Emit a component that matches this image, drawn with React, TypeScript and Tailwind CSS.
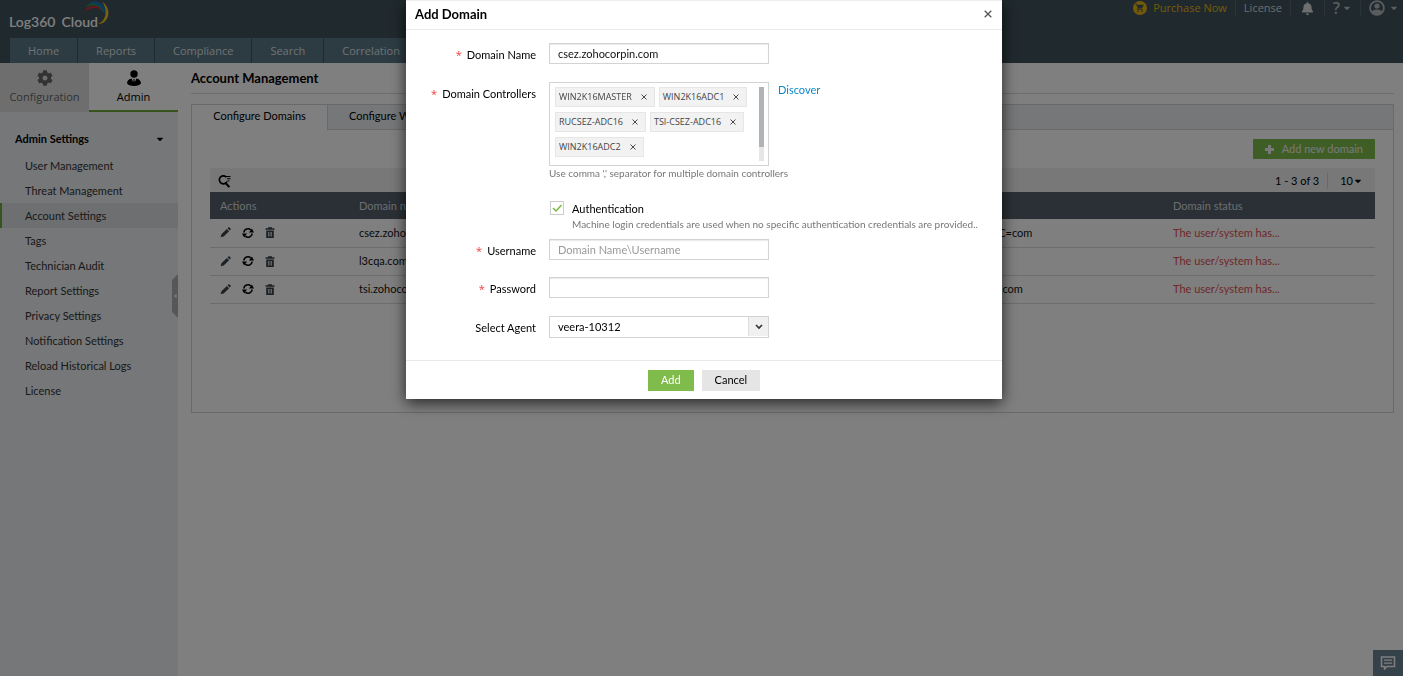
import React from "react";
import { FaBell, FaCog, FaCaretDown } from "react-icons/fa";
import { MdShoppingCart } from "react-icons/md";

const navItems = ["Home", "Reports", "Compliance", "Search", "Correlation"];

const sideItems = [
  "User Management",
  "Threat Management",
  "Account Settings",
  "Tags",
  "Technician Audit",
  "Report Settings",
  "Privacy Settings",
  "Notification Settings",
  "Reload Historical Logs",
  "License",
];

const domains = [
  { name: "csez.zohocorpin.com", dn: "DC=csez,DC=zohocorpin,DC=com" },
  { name: "l3cqa.com", dn: "DC=l3cqa,DC=com" },
  { name: "tsi.zohocorpin.com", dn: "DC=tsi,DC=zohocorpin,DC=com" },
];

const controllers = [
  "WIN2K16MASTER",
  "WIN2K16ADC1",
  "RUCSEZ-ADC16",
  "TSI-CSEZ-ADC16",
  "WIN2K16ADC2",
];

function Logo() {
  return (
    <a href="#" className="flex items-end pl-[9px] font-['Lato',sans-serif] text-white">
      <span className="flex gap-[6px] pb-[5px] text-[14px] leading-4 font-semibold">
        <span>Log360</span>
        <span>Cloud</span>
      </span>
      <svg viewBox="0 0 26 26" className="-ml-[15px] mb-[9px] size-[26px] shrink-0" aria-hidden="true">
        <path d="M1 12.500C4 5 12 3 18 9l1 2C14 6.500 7 7 1 12.500Z" fill="#c2313d" />
        <path d="M2 7.500C7 1 16 2 19.500 8c1 2 1.500 3.500 1 5C17 6 11 3 2 7.500Z" fill="#1c9a5b" />
        <path d="M6 2.500c8-3 15 .500 17 8 .500 2 0 4-.500 5.500C21 8 15 3 6 2.500Z" fill="#1e6fc0" />
        <path d="M19 1.500c7 5 8 12 4.500 18-2 3-5 4.500-8.500 4.500C23 20 25.500 11 19 1.500Z" fill="#f2c01d" />
      </svg>
    </a>
  );
}

function AdminIcon() {
  return (
    <svg viewBox="0 0 16 16" className="size-4" fill="currentColor" aria-hidden="true">
      <circle cx="8" cy="4" r="3.700" />
      <path d="M1 13.200C1 10.600 3.200 8.800 5.600 8.500L7.100 12l.5-2.300L7.200 9h1.600l-.4.700.5 2.300 1.500-3.500c2.400.300 4.600 2.100 4.600 4.700C14 14.900 11.500 16 8 16s-6-1.100-7-2.800Z" />
    </svg>
  );
}

function AccountIcon() {
  return (
    <svg viewBox="0 0 16 16" className="size-4" aria-hidden="true">
      <circle cx="8" cy="8" r="6.900" fill="none" stroke="currentColor" strokeWidth="1.800" />
      <circle cx="8" cy="6" r="2.600" fill="currentColor" />
      <path d="M2.500 12.200c1-2 3-2.700 5.500-2.700s4.500.7 5.500 2.700L8 15Z" fill="currentColor" />
    </svg>
  );
}

function PlusIcon() {
  return (
    <svg viewBox="0 0 9 9" className="size-[9px]" fill="currentColor" aria-hidden="true">
      <path d="M3 0h3v3h3v3H6v3H3V6H0V3h3Z" />
    </svg>
  );
}

function FilterSearchIcon() {
  return (
    <svg viewBox="0 0 13 13" className="size-[13px]" fill="none" stroke="currentColor" aria-hidden="true">
      <path d="M8.300 2.100A4 4 0 1 0 9 6.500" strokeWidth="1.700" />
      <path d="m7.800 8.200 3.600 3.900" strokeWidth="2" />
      <path d="M8 1.500h4.500M9 3.700h3.500M9.500 5.900h2" strokeWidth="1" />
    </svg>
  );
}

function PencilIcon() {
  return (
    <svg viewBox="0 0 12 12" className="size-[11px]" fill="currentColor" aria-hidden="true">
      <path d="M.7 11.300 1.600 8l5.900-5.900 2.400 2.400L4 10.400ZM8.200 1.400l.9-.9c.4-.4.900-.4 1.300 0l1.100 1.100c.4.400.4.900 0 1.300l-.9.900Z" />
    </svg>
  );
}

function RefreshIcon() {
  return (
    <svg viewBox="0 0 12 12" className="size-3" fill="none" stroke="currentColor" strokeWidth="1.600" aria-hidden="true">
      <path d="M1.800 5.500A4.200 4.200 0 0 1 8.700 2.800" />
      <path d="M10.200 6.500A4.200 4.200 0 0 1 3.300 9.200" />
      <path d="m7 5.400 5 .1L9.900 1.600ZM5 6.600 0 6.500l2.100 3.900Z" fill="currentColor" stroke="none" />
    </svg>
  );
}

function TrashIcon() {
  return (
    <svg viewBox="0 0 10 11" className="h-[11px] w-[10px]" aria-hidden="true">
      <path d="M.5 1.200H3V.2h4v1h2.500v1.500h-9ZM1.200 3.500h7.600V11H1.200Z" fill="currentColor" />
      <path d="M3.500 5v4.500M5 5v4.500M6.500 5v4.500" stroke="#fff" strokeWidth=".7" />
    </svg>
  );
}

function CloseIcon({ className }: { className: string }) {
  return (
    <svg viewBox="0 0 8 8" className={className} stroke="currentColor" strokeWidth="1.300" aria-hidden="true">
      <path d="m.7.700 6.600 6.600M7.300.700.700 7.300" />
    </svg>
  );
}

function Header() {
  return (
    <header className="bg-[#40525a] font-['Open_Sans',sans-serif] text-white">
      <div className="flex h-[38px] items-start justify-between">
        <Logo />
        <div className="flex h-4 items-center text-[#d8dcde]">
          <a href="#" className="flex items-center gap-[6px] pr-2 text-[#e6b412]">
            <span className="flex size-[14px] items-center justify-center rounded-full bg-[#e6b412] text-[#40525a]">
              <MdShoppingCart className="size-[10px]" />
            </span>
            Purchase Now
          </a>
          <a href="#" className="border-l border-[#56666d] px-2">License</a>
          <button type="button" aria-label="Notifications" className="flex h-4 w-[34px] items-center justify-center border-l border-[#56666d]">
            <FaBell className="size-[13px]" />
          </button>
          <button type="button" aria-label="Help" className="flex h-4 w-9 items-center justify-center gap-[2px] border-l border-[#56666d] text-[16px] font-semibold text-[#b4babd]">
            ?<FaCaretDown className="size-[10px]" />
          </button>
          <button type="button" aria-label="Account" className="flex h-4 items-center gap-1 border-l border-[#56666d] pr-1 pl-2 text-[#b4babd]">
            <AccountIcon />
            <FaCaretDown className="size-[10px]" />
          </button>
        </div>
      </div>
      <nav className="flex h-[25px] gap-px pl-[10px]">
        {navItems.map((item) => (
          <a key={item} href="#" className="flex items-center bg-[#5a7887] px-[18px] text-[#dfe3e5]">
            {item}
          </a>
        ))}
      </nav>
    </header>
  );
}

function Sidebar() {
  return (
    <aside className="relative w-[178px] shrink-0 bg-[#ebeef0]">
      <div className="flex h-[49px] font-['Open_Sans',sans-serif]">
        <a href="#" className="flex flex-1 flex-col items-center gap-[3px] bg-[#dcdcdc] pt-[7px] text-[#666]">
          <FaCog className="size-4" />
          Configuration
        </a>
        <a href="#" className="flex flex-1 flex-col items-center gap-[3px] border-b-2 border-[#6fa83b] bg-white pt-[7px] text-black">
          <AdminIcon />
          Admin
        </a>
      </div>
      <button type="button" className="mt-[17px] flex h-5 w-full items-center justify-between pr-[13px] pl-[15px] font-bold text-black">
        Admin Settings
        <FaCaretDown className="size-[10px]" />
      </button>
      <ul className="mt-1 text-[#333]">
        {sideItems.map((item) => (
          <li key={item}>
            <a
              href="#"
              className={
                item === "Account Settings"
                  ? "flex h-[25px] items-center border-l-2 border-[#6fa83b] bg-[#dcdfe1] pl-[23px]"
                  : "flex h-[25px] items-center pl-[25px]"
              }
            >
              {item}
            </a>
          </li>
        ))}
      </ul>
      <button type="button" aria-label="Collapse sidebar" className="absolute top-[211px] right-0 h-[44px] w-[6px]">
        <svg viewBox="0 0 6 44" className="h-[44px] w-[6px]" aria-hidden="true">
          <path d="M6 0v44L0 38V6Z" fill="#a9b1b5" />
          <path d="M4.500 20v4L2 22Z" fill="#fff" />
        </svg>
      </button>
    </aside>
  );
}

function DomainTable() {
  return (
    <table className="w-full table-fixed border-collapse text-left">
      <colgroup>
        <col className="w-[139px]" />
        <col />
        <col className="w-[297px]" />
        <col className="w-[212px]" />
      </colgroup>
      <thead className="bg-[#54616a] text-[#d8dcde]">
        <tr className="h-[27px]">
          <th className="pl-[10px] font-normal">Actions</th>
          <th className="pl-[10px] font-normal">Domain name</th>
          <th className="font-normal">Domain DN</th>
          <th className="pl-[10px] font-normal">Domain status</th>
        </tr>
      </thead>
      <tbody>
        {domains.map((d) => (
          <tr key={d.name} className="h-7 border-b border-[#d9d9d9] text-[#111]">
            <td className="pl-[10px]">
              <div className="flex items-center gap-[11px] text-[#39434a]">
                <button type="button" aria-label="Edit"><PencilIcon /></button>
                <button type="button" aria-label="Refresh" className="text-black"><RefreshIcon /></button>
                <button type="button" aria-label="Delete"><TrashIcon /></button>
              </div>
            </td>
            <td className="pl-[10px]">{d.name}</td>
            <td>{d.dn}</td>
            <td className="pl-[10px] text-[#e04f4f]">The user/system has...</td>
          </tr>
        ))}
      </tbody>
    </table>
  );
}

function MainContent() {
  return (
    <main className="flex-1 pr-[9px] pl-[13px]">
      <h1 className="flex h-[31px] items-center border-b border-[#d9d9d9] text-[13px] font-bold text-black">
        Account Management
      </h1>
      <section className="mt-[10px] min-h-[309px] border border-[#d3d3d3]">
        <div className="flex h-[25px] bg-[#ebeef0] text-black">
          <button type="button" className="w-[136px] border-r border-[#d3d3d3] bg-white pb-[3px]">Configure Domains</button>
          <div className="flex flex-1 border-b border-[#d3d3d3]">
            <button type="button" className="px-[21px] pb-[2px]">Configure Workgroups</button>
          </div>
        </div>
        <div className="px-[18px] pt-[9px]">
          <div className="flex justify-end">
            <button type="button" className="flex h-5 items-center gap-2 bg-[#7fbc4a] px-3 text-[#f2f2f2]">
              <PlusIcon />
              Add new domain
            </button>
          </div>
          <div className="mt-[9px] flex h-6 items-center justify-between bg-[#f0f0f0] pt-0.5 pr-3 pl-2 text-black">
            <button type="button" aria-label="Search"><FilterSearchIcon /></button>
            <div className="flex items-center">
              <span className="pr-2">1 - 3 of 3</span>
              <button type="button" className="flex h-4 items-center border-l border-[#d3d3d3] pl-3">
                10
                <FaCaretDown className="size-[10px]" />
              </button>
            </div>
          </div>
          <DomainTable />
        </div>
      </section>
    </main>
  );
}

function Label({ htmlFor, required, children }: { htmlFor: string; required?: boolean; children: string }) {
  return (
    <label htmlFor={htmlFor} className="flex h-6 w-[130px] shrink-0 items-center justify-end text-black">
      {required && <span className="mr-[5px] font-['Open_Sans',sans-serif] text-[#f03c3c]">*</span>}
      {children}
    </label>
  );
}

const inputClass =
  "block h-[21px] w-[220px] border border-[#d3d3d3] bg-white px-2 text-[#111] shadow-[inset_0_1px_1px_#e9e9e9] outline-none placeholder:text-[#999]";

function AddDomainDialog() {
  return (
    <div
      role="dialog"
      aria-labelledby="dialog-title"
      className="w-[596px] border-t border-[#eee] bg-white shadow-[0_4px_14px_rgba(0,0,0,0.7)]"
    >
      <div className="flex h-[29px] items-center justify-between border-b border-[#e9e9e9] pr-[10px] pb-0.5 pl-[9px]">
        <h2 id="dialog-title" className="text-[13px] font-bold text-black">Add Domain</h2>
        <button type="button" aria-label="Close" className="text-[#555]"><CloseIcon className="size-2" /></button>
      </div>
      <form className="text-black" onSubmit={(e) => e.preventDefault()}>
        <div className="mt-[13px] flex gap-[13px]">
          <Label htmlFor="domain-name" required>Domain Name</Label>
          <input id="domain-name" type="text" defaultValue="csez.zohocorpin.com" className={inputClass} />
        </div>
        <div className="mt-[15px] flex gap-[13px]">
          <Label htmlFor="controllers" required>Domain Controllers</Label>
          <div className="w-[220px]">
            <div id="controllers" className="flex h-[84px] justify-between border border-[#d3d3d3] py-[4px] pr-1 pl-[5px]">
              <ul className="flex flex-1 flex-wrap content-start gap-x-1 gap-y-[5px] font-['Open_Sans',sans-serif] text-[9px] text-[#444]">
                {controllers.map((c) => (
                  <li key={c} className="flex h-5 items-center gap-[9px] border border-[#e6e6e6] bg-[#f2f2f2] pr-[7px] pl-[3px]">
                    {c}
                    <button type="button" aria-label={"Remove " + c}><CloseIcon className="size-[6px]" /></button>
                  </li>
                ))}
              </ul>
              <div className="w-[5px] bg-[#e6e6e6]">
                <div className="h-[60px] bg-[#b0b4b7]" />
              </div>
            </div>
            <p className="text-[10px] leading-[14px] whitespace-nowrap text-[#777]">
              Use comma ',' separator for multiple domain controllers
            </p>
          </div>
          <a href="#" className="-ml-1 h-4 text-[#0d87c9]">Discover</a>
        </div>
        <div className="mt-[21px] flex gap-2 pl-[144px]">
          <span className="relative size-[14px]">
            <input id="auth" type="checkbox" defaultChecked className="block size-[14px] appearance-none border border-[#ccc] bg-white" />
            <svg viewBox="0 0 14 14" className="pointer-events-none absolute inset-0 size-[14px]" fill="none" stroke="#76bc3c" strokeWidth="1.500" aria-hidden="true">
              <path d="m3 7 3 3 5.500-6" />
            </svg>
          </span>
          <div>
            <label htmlFor="auth" className="block leading-4">Authentication</label>
            <p className="text-[10px] leading-[14px] text-[#777]">
              Machine login credentials are used when no specific authentication credentials are provided..
            </p>
          </div>
        </div>
        <div className="mt-2 flex gap-[13px]">
          <Label htmlFor="username" required>Username</Label>
          <input id="username" type="text" placeholder="Domain Name\Username" className={inputClass} />
        </div>
        <div className="mt-[14px] flex gap-[13px]">
          <Label htmlFor="password" required>Password</Label>
          <input id="password" type="password" className={inputClass} />
        </div>
        <div className="mt-[15px] flex gap-[13px]">
          <Label htmlFor="agent">Select Agent</Label>
          <div className="relative w-[220px]">
            <select id="agent" className="block h-[22px] w-full appearance-none border border-[#d3d3d3] bg-white px-2 text-black">
              <option>veera-10312</option>
            </select>
            <span className="pointer-events-none absolute top-px right-px flex h-[19px] w-5 items-center justify-center border-l border-[#ddd] bg-[#f0f0f0]">
              <svg viewBox="0 0 8 6" className="h-[6px] w-2" fill="none" stroke="#333" strokeWidth="1.700" aria-hidden="true">
                <path d="m1 1 3 3 3-3" />
              </svg>
            </span>
          </div>
        </div>
        <div className="mt-5 flex h-[39px] items-center justify-center gap-2 border-t border-[#e9e9e9]">
          <button type="submit" className="h-[21px] bg-[#80bc4b] px-[13px] text-white">Add</button>
          <button type="button" className="h-[21px] bg-[#e5e5e5] px-[13px] text-black">Cancel</button>
        </div>
      </form>
    </div>
  );
}

export default function App() {
  return (
    <div className="relative flex min-h-screen flex-col bg-white font-['Lato',sans-serif] text-[11px] leading-4">
      <Header />
      <div className="flex flex-1">
        <Sidebar />
        <MainContent />
      </div>
      <button type="button" aria-label="Chat" className="fixed right-0 bottom-0 flex h-[26px] w-[30px] items-center justify-center bg-[#6b8594] text-white">
        <svg viewBox="0 0 16 14" className="h-[14px] w-4" fill="none" stroke="currentColor" strokeWidth="1.500" aria-hidden="true">
          <path d="M1.500 1h13v9.500H7L4.500 13v-2.500h-3Z" />
          <path d="M4 4.200h8M4 7.200h8" strokeWidth="1.300" />
        </svg>
      </button>
      <div className="fixed inset-0 flex items-start justify-center bg-black/50 pl-[5px]">
        <AddDomainDialog />
      </div>
    </div>
  );
}
